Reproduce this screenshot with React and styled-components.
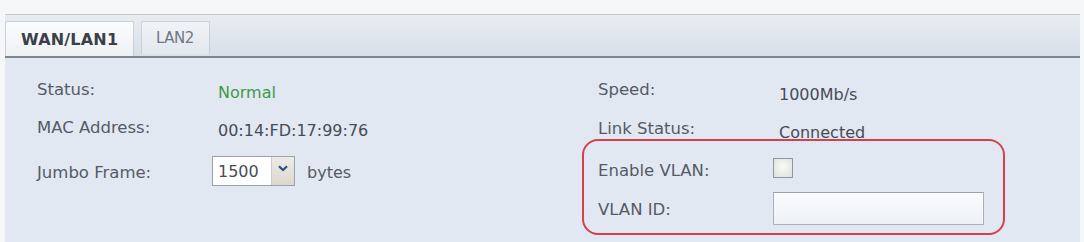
import styled, { createGlobalStyle } from "styled-components";

const GlobalStyle = createGlobalStyle`
  body {
    margin: 0;
    background: #ffffff;
    font-family: "DejaVu Sans", "Liberation Sans", sans-serif;
  }
`;

const Page = styled.div`
  width: 1084px;
  height: 242px;
  overflow: hidden;
  background: #f6f7f9;
  padding-top: 14px;
  box-sizing: border-box;
`;

const Frame = styled.div`
  margin-left: 5px;
  width: 1075px;
`;

const TabBar = styled.div`
  display: flex;
  align-items: flex-end;
  gap: 7px;
  height: 41px;
  border-top: 1px solid #c5cad1;
  border-bottom: 2px solid #7e868f;
  background: linear-gradient(#e8ecf2, #d9e0e9);
  box-sizing: content-box;
`;

const Tab = styled.div`
  display: flex;
  align-items: center;
  box-sizing: border-box;
  height: ${(p) => (p.$active ? "35px" : "33px")};
  margin-bottom: ${(p) => (p.$active ? "0" : "2px")};
  padding-left: ${(p) => (p.$active ? "15px" : "14px")};
  width: ${(p) => (p.$active ? "129px" : "69px")};
  background: ${(p) =>
    p.$active
      ? "linear-gradient(#fbfcfd, #eef1f5)"
      : "linear-gradient(#f0f3f7, #e3e8ef)"};
  border: 1px solid #c9d0d8;
  border-bottom: none;
  border-radius: 2px 2px 0 0;
  color: ${(p) => (p.$active ? "#3a4049" : "#6f7783")};
  font-weight: ${(p) => (p.$active ? "bold" : "normal")};
  font-size: ${(p) => (p.$active ? "16px" : "15px")};
  letter-spacing: ${(p) => (p.$active ? "0.2px" : "-0.5px")};
`;

const Panel = styled.div`
  background: #e2e8f1;
  display: grid;
  grid-template-columns: 593px 1fr;
  padding-top: 12px;
  height: 200px;
`;

const Column = styled.div`
  display: flex;
  flex-direction: column;
  padding-left: ${(p) => p.$pad}px;
`;

const Row = styled.div`
  display: flex;
  align-items: center;
  height: ${(p) => p.$h || 39}px;
`;

const Label = styled.div`
  width: 175px;
  flex: none;
  font-size: 16.5px;
  color: #545b66;
`;

const Value = styled.div`
  padding-left: 6px;
  margin-top: ${(p) => p.$drop || 5}px;
  font-size: 16px;
  color: ${(p) => (p.$ok ? "#3e9a47" : "#454c57")};
`;

const Select = styled.div`
  display: flex;
  width: 83px;
  height: 30px;
  box-sizing: border-box;
  border: 1px solid #9aa2ad;
  background: #ffffff;
  margin-top: -2px;
`;

const SelectText = styled.div`
  flex: 1;
  display: flex;
  align-items: center;
  padding-left: 5px;
  font-size: 16px;
  color: #474d57;
  border-right: 1px solid #c9ccd1;
`;

const SelectButton = styled.div`
  width: 22px;
  display: flex;
  align-items: center;
  justify-content: center;
  padding-bottom: 6px;
  background: linear-gradient(#eeebe6, #ddd7cd);
`;

const Unit = styled.div`
  padding-left: 12px;
  font-size: 16px;
  color: #545b66;
`;

const Highlight = styled.div`
  margin-top: -9px;
  margin-left: -16px;
  width: 423px;
  box-sizing: border-box;
  padding: 10px 0 4px 14px;
  border: 2px solid #d4404c;
  border-radius: 16px;
`;

const Checkbox = styled.div`
  width: 20px;
  height: 20px;
  box-sizing: border-box;
  margin-top: -6px;
  border: 1px solid #8f959c;
  background: radial-gradient(circle at 50% 45%, #fbfbf6, #dcdfd9);
`;

const TextInput = styled.div`
  width: 211px;
  height: 33px;
  box-sizing: border-box;
  margin-top: -3px;
  border: 1px solid #a9b1bb;
  border-top-color: #9aa2ac;
  background: linear-gradient(#f9fafc, #eef2f7);
`;

const SectionRow = styled.div`
  grid-column: 1 / 3;
  display: grid;
  grid-template-columns: 563px 1fr;
  padding-left: 72px;
  margin-top: -1px;
  font-size: 16px;
  font-weight: bold;
  color: #2f343b;
`;

const Chevron = () => (
  <svg width="10" height="7" viewBox="0 0 10 7">
    <path d="M1 1.2 L5 5 L9 1.2" fill="none" stroke="#2c4f8f" strokeWidth="2.2" />
  </svg>
);

export default function App() {
  return (
    <Page>
      <GlobalStyle />
      <Frame>
        <TabBar>
          <Tab $active>WAN/LAN1</Tab>
          <Tab>LAN2</Tab>
        </TabBar>
        <Panel>
          <Column $pad={32}>
            <Row $h={39}>
              <Label>Status:</Label>
              <Value $ok>Normal</Value>
            </Row>
            <Row $h={36}>
              <Label>MAC Address:</Label>
              <Value $drop={6}>00:14:FD:17:99:76</Value>
            </Row>
            <Row $h={54}>
              <Label>Jumbo Frame:</Label>
              <Select>
                <SelectText>1500</SelectText>
                <SelectButton>
                  <Chevron />
                </SelectButton>
              </Select>
              <Unit>bytes</Unit>
            </Row>
          </Column>
          <Column $pad={0}>
            <Row>
              <Label>Speed:</Label>
              <Value $drop={9}>1000Mb/s</Value>
            </Row>
            <Row>
              <Label>Link Status:</Label>
              <Value $drop={8}>Connected</Value>
            </Row>
            <Highlight>
              <Row>
                <Label>Enable VLAN:</Label>
                <Checkbox />
              </Row>
              <Row>
                <Label>VLAN ID:</Label>
                <TextInput />
              </Row>
            </Highlight>
          </Column>
          <SectionRow>
            <span>IPv4</span>
            <span>IPv6</span>
          </SectionRow>
        </Panel>
      </Frame>
    </Page>
  );
}
